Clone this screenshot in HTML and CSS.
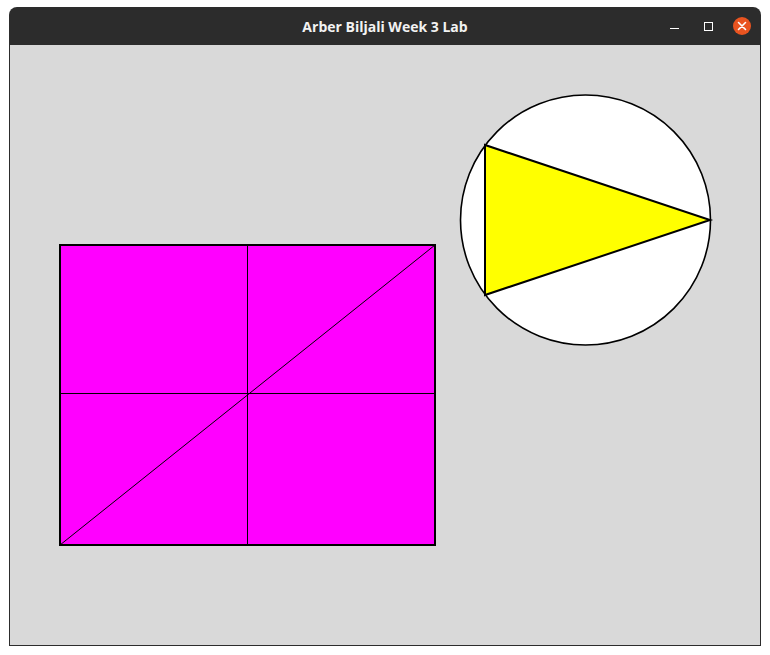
FILE: index.html
```html
<!DOCTYPE html>
<html>
<head>
<meta charset="utf-8">
<link rel="stylesheet" href="styles.css">
</head>
<body>
<div class="window">
  <div class="titlebar">
    <span class="title">Arber Biljali Week 3 Lab</span>
    <div class="controls">
      <span class="btn-min"></span>
      <span class="btn-max"></span>
      <span class="btn-close">
        <svg width="18" height="18" viewBox="0 0 18 18"><path d="M5.5 5.5 L12.5 12.5 M12.5 5.5 L5.5 12.5" stroke="#fff" stroke-width="1.6" stroke-linecap="round"/></svg>
      </span>
    </div>
  </div>
  <div class="content">
    <svg class="canvas" width="750" height="600" viewBox="0 0 750 600">
      <rect x="50" y="200" width="375" height="300" fill="#ff00ff" stroke="#000" stroke-width="2"/>
      <line x1="237.5" y1="200" x2="237.5" y2="500" stroke="#000" stroke-width="1"/>
      <line x1="50" y1="348.5" x2="425" y2="348.5" stroke="#000" stroke-width="1"/>
      <line x1="50" y1="500" x2="425" y2="200" stroke="#000" stroke-width="1"/>
      <circle cx="575.5" cy="175" r="125" fill="#fff" stroke="#000" stroke-width="1.6"/>
      <polygon points="475,100 475,250 700,175" fill="#ffff00" stroke="#000" stroke-width="2" stroke-linejoin="miter"/>
    </svg>
  </div>
</div>
</body>
</html>
```
FILE: styles.css
```css
html, body {
  margin: 0;
  padding: 0;
  background: #ffffff;
}
body {
  padding: 7px 0 0 9px;
}
.window {
  width: 752px;
  display: flex;
  flex-direction: column;
}
.titlebar {
  height: 38px;
  background: #2c2c2c;
  border-radius: 8px 8px 0 0;
  display: flex;
  align-items: center;
  justify-content: center;
  position: relative;
}
.title {
  color: #f2f2f2;
  font-family: "Open Sans", "DejaVu Sans", sans-serif;
  font-weight: 700;
  font-size: 14px;
  margin-left: 0;
}
.controls {
  position: absolute;
  right: 10px;
  top: 0;
  height: 38px;
  display: flex;
  align-items: center;
}
.btn-min {
  width: 9px;
  height: 1px;
  background: #ffffff;
  margin-top: 4px;
  margin-right: 25px;
}
.btn-max {
  width: 7px;
  height: 7px;
  border: 1px solid #ffffff;
  margin-right: 20px;
}
.btn-close {
  width: 18px;
  height: 18px;
  border-radius: 50%;
  background: #e95420;
  display: flex;
}
.content {
  height: 600px;
  background: #d9d9d9;
  border: 1px solid #2c2c2c;
  border-top: none;
}
.canvas {
  display: block;
}
```
